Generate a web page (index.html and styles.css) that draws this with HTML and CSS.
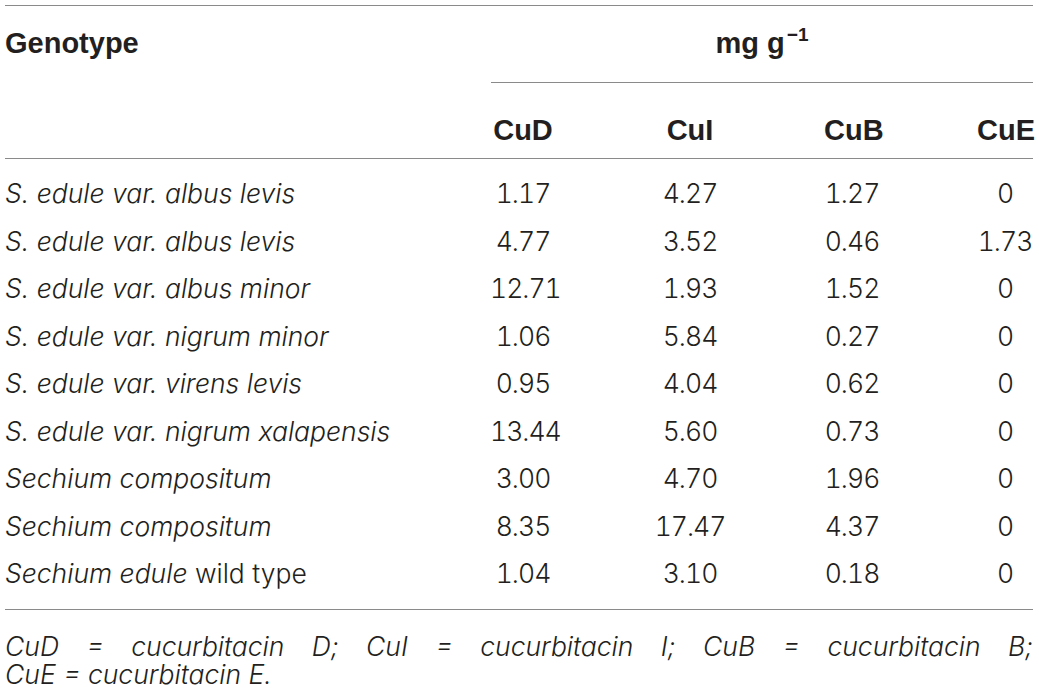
FILE: index.html
```html
<!DOCTYPE html>
<html lang="en">
<head>
<meta charset="utf-8">
<title>Cucurbitacin content by genotype</title>
<link rel="stylesheet" href="styles.css">
</head>
<body>
<div class="tbl">
  <div class="head">
    <div class="genotype">Genotype</div>
    <div class="unit">mg g<sup>−1</sup></div>
    <div class="colh">CuD</div>
    <div class="colh">CuI</div>
    <div class="colh">CuB</div>
    <div class="colh">CuE</div>
  </div>
  <div class="body">
    <div class="name"><i>S. edule var. albus levis</i></div><div class="num">1.17</div><div class="num">4.27</div><div class="num">1.27</div><div class="num">0</div>
    <div class="name"><i>S. edule var. albus levis</i></div><div class="num">4.77</div><div class="num">3.52</div><div class="num">0.46</div><div class="num">1.73</div>
    <div class="name"><i>S. edule var. albus minor</i></div><div class="num">12.71</div><div class="num">1.93</div><div class="num">1.52</div><div class="num">0</div>
    <div class="name"><i>S. edule var. nigrum minor</i></div><div class="num">1.06</div><div class="num">5.84</div><div class="num">0.27</div><div class="num">0</div>
    <div class="name"><i>S. edule var. virens levis</i></div><div class="num">0.95</div><div class="num">4.04</div><div class="num">0.62</div><div class="num">0</div>
    <div class="name"><i>S. edule var. nigrum xalapensis</i></div><div class="num">13.44</div><div class="num">5.60</div><div class="num">0.73</div><div class="num">0</div>
    <div class="name"><i>Sechium compositum</i></div><div class="num">3.00</div><div class="num">4.70</div><div class="num">1.96</div><div class="num">0</div>
    <div class="name"><i>Sechium compositum</i></div><div class="num">8.35</div><div class="num">17.47</div><div class="num">4.37</div><div class="num">0</div>
    <div class="name"><i>Sechium edule</i> wild type</div><div class="num">1.04</div><div class="num">3.10</div><div class="num">0.18</div><div class="num">0</div>
  </div>
  <p class="note">CuD = cucurbitacin D; CuI = cucurbitacin I; CuB = cucurbitacin B; CuE&nbsp;=&nbsp;cucurbitacin&nbsp;E.</p>
</div>
</body>
</html>
```

FILE: styles.css
```css
html, body {
  margin: 0;
  padding: 0;
  background: #ffffff;
}

body {
  font-family: Inter, "Liberation Sans", Arial, sans-serif;
  font-weight: 300;
  font-size: 26.5px;
  color: #231f20;
}

.tbl {
  width: 1028px;
  margin: 5px 0 0 5px;
  border-top: 1px solid #8a8a8a;
}

.head,
.body {
  display: grid;
  grid-template-columns: 388px 66px 74px 56px 56px;
  column-gap: 97px;
}

.head {
  border-bottom: 1px solid #8a8a8a;
  font-family: "Liberation Sans", Arial, sans-serif;
  font-weight: bold;
  font-size: 29px;
}

.genotype {
  line-height: 74px;
  white-space: nowrap;
}

.unit {
  grid-column: 2 / -1;
  text-align: center;
  line-height: 74px;
  padding-bottom: 2px;
  border-bottom: 1px solid #8a8a8a;
  margin-left: 1px;
}

.unit sup {
  font-size: 19px;
  line-height: 0;
  vertical-align: 12px;
  margin-left: 2px;
}

.colh {
  grid-row: 2;
  text-align: center;
  line-height: 47.5px;
  padding: 24px 0 3.5px;
  white-space: nowrap;
}

.colh:nth-child(3) { grid-column: 2; }
.colh:nth-child(4) { grid-column: 3; }
.colh:nth-child(5) { grid-column: 4; }
.colh:nth-child(6) { grid-column: 5; }

.body {
  padding: 11px 0;
  border-bottom: 1px solid #8a8a8a;
  grid-auto-rows: 47.5px;
  line-height: 47.5px;
}

.name {
  white-space: nowrap;
}

.num {
  text-align: center;
  white-space: nowrap;
  font-variant-numeric: tabular-nums;
  letter-spacing: -1px;
}

.note {
  margin: 0;
  padding-top: 22px;
  line-height: 28px;
  font-style: italic;
  text-align: justify;
}
```
